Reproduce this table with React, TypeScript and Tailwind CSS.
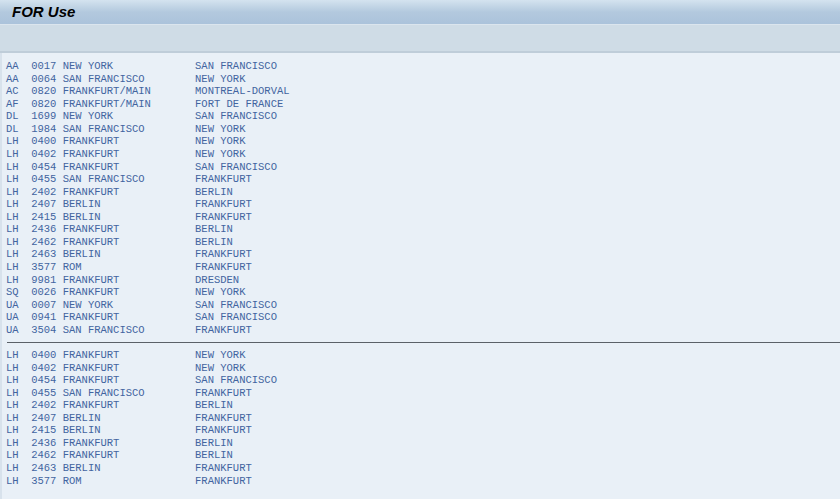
const flights: [string, string, string, string][] = [
  ["AA", "0017", "NEW YORK", "SAN FRANCISCO"],
  ["AA", "0064", "SAN FRANCISCO", "NEW YORK"],
  ["AC", "0820", "FRANKFURT/MAIN", "MONTREAL-DORVAL"],
  ["AF", "0820", "FRANKFURT/MAIN", "FORT DE FRANCE"],
  ["DL", "1699", "NEW YORK", "SAN FRANCISCO"],
  ["DL", "1984", "SAN FRANCISCO", "NEW YORK"],
  ["LH", "0400", "FRANKFURT", "NEW YORK"],
  ["LH", "0402", "FRANKFURT", "NEW YORK"],
  ["LH", "0454", "FRANKFURT", "SAN FRANCISCO"],
  ["LH", "0455", "SAN FRANCISCO", "FRANKFURT"],
  ["LH", "2402", "FRANKFURT", "BERLIN"],
  ["LH", "2407", "BERLIN", "FRANKFURT"],
  ["LH", "2415", "BERLIN", "FRANKFURT"],
  ["LH", "2436", "FRANKFURT", "BERLIN"],
  ["LH", "2462", "FRANKFURT", "BERLIN"],
  ["LH", "2463", "BERLIN", "FRANKFURT"],
  ["LH", "3577", "ROM", "FRANKFURT"],
  ["LH", "9981", "FRANKFURT", "DRESDEN"],
  ["SQ", "0026", "FRANKFURT", "NEW YORK"],
  ["UA", "0007", "NEW YORK", "SAN FRANCISCO"],
  ["UA", "0941", "FRANKFURT", "SAN FRANCISCO"],
  ["UA", "3504", "SAN FRANCISCO", "FRANKFURT"],
];

// second list: only Lufthansa, without the Dresden flight
const lufthansa = flights.filter(f => f[0] === "LH" && f[1] !== "9981");

function line(f: [string, string, string, string]) {
  return `${f[0]}  ${f[1]} ${f[2].padEnd(20, " ")} ${f[3]}`;
}

function Row({ f }: { f: [string, string, string, string] }) {
  return <div className="h-[12.57px] whitespace-pre">{line(f)}</div>;
}

export default function App() {
  return (
    <div className="w-[840px] h-[499px] overflow-hidden flex flex-col bg-[#e9f0f7]">
      <div className="h-[25px] shrink-0 flex items-center pl-[12px] bg-gradient-to-b from-[#d4e3ef] via-[#b3c9de] to-[#abc3db] border-b border-[#dbe5ee]">
        <h1 className="text-[15px] font-bold italic text-black" style={{ fontFamily: '"Liberation Sans", Arial, sans-serif' }}>
          FOR Use
        </h1>
      </div>
      <div className="h-[28px] shrink-0 bg-[#cfdce6] border-b-2 border-[#bfcdd9]" />
      <div className="flex-1 border-l-2 border-[#d8e2ec] pt-[7px] pl-[4px]">
        <div
          className="text-[10.5px] leading-[12.57px] text-[#4264a0]"
          style={{ fontFamily: '"Liberation Mono", "Courier New", monospace' }}
        >
          {flights.map((f, i) => (
            <Row key={"a" + i} f={f} />
          ))}
          <div className="h-[12.57px] flex items-center pl-[1px]">
            <div className="w-full border-t-[1.5px] border-[#5b6168]" />
          </div>
          {lufthansa.map((f, i) => (
            <Row key={"b" + i} f={f} />
          ))}
        </div>
      </div>
    </div>
  );
}
